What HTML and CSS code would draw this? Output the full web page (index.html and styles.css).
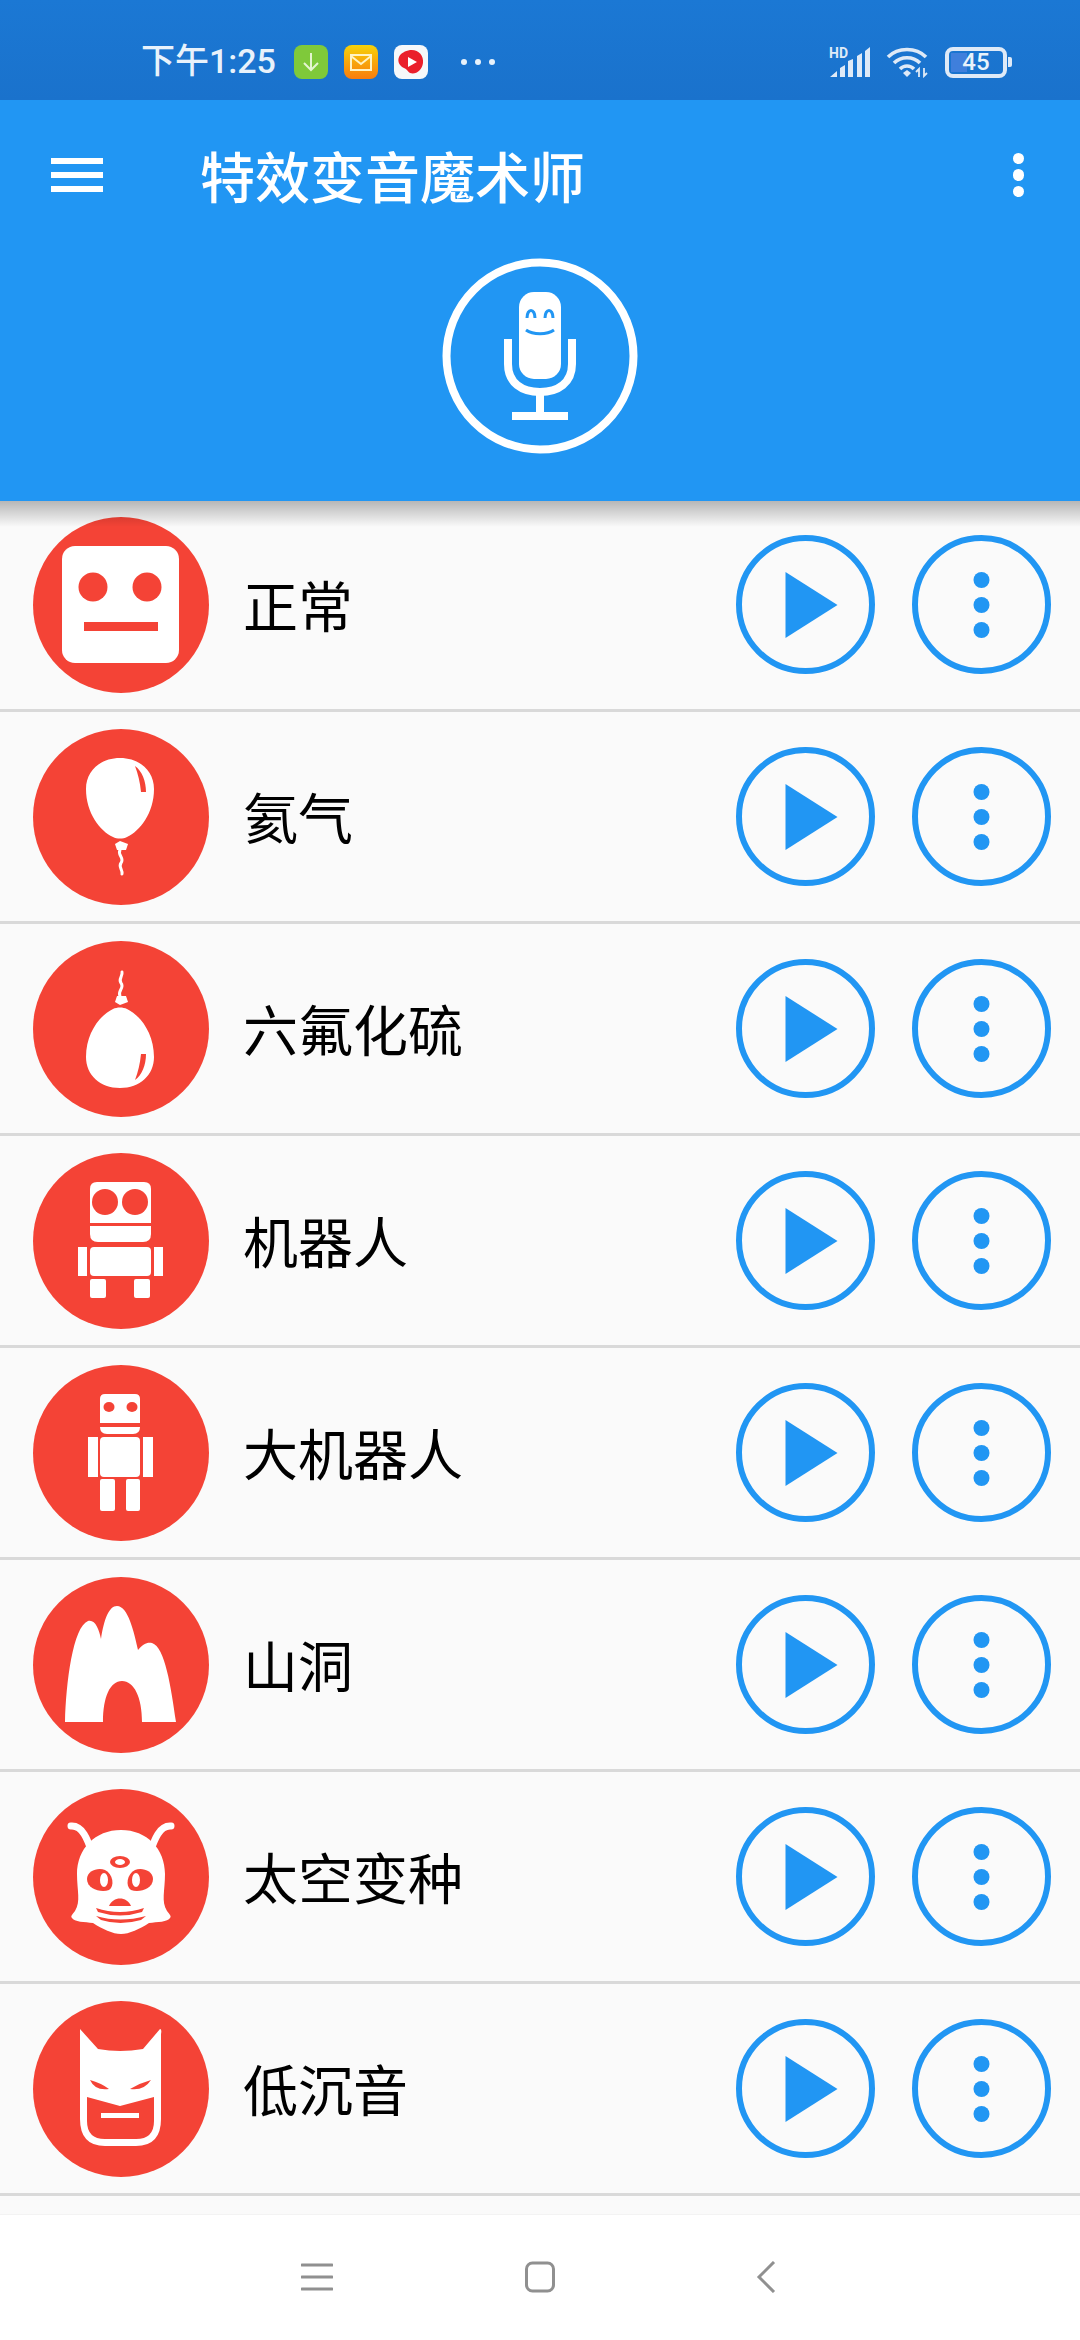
FILE: index.html
```html
<!DOCTYPE html>
<html lang="zh-CN">
<head>
    <meta charset="UTF-8">
    <meta name="viewport" content="width=device-width, initial-scale=1.0">
    <title>特效变音魔术师</title>
    <link rel="stylesheet" href="styles.css">
</head>
<body>
    <svg class="sprite" aria-hidden="true">
        <symbol id="btn-play" viewBox="0 0 139 139">
            <circle class="ring" cx="69.5" cy="69.5" r="66.5"/>
            <polygon class="blue" points="49.5,37 101.5,70 49.5,103"/>
        </symbol>
        <symbol id="btn-more" viewBox="0 0 139 139">
            <circle class="ring" cx="69.5" cy="69.5" r="66.5"/>
            <circle class="blue" cx="69.5" cy="45" r="8"/>
            <circle class="blue" cx="69.5" cy="70" r="8"/>
            <circle class="blue" cx="69.5" cy="95" r="8"/>
        </symbol>
        <symbol id="balloon" viewBox="0 0 176 176">
            <path class="w" d="M87 29C107 29 121 42 121 60C121 84 107 102 94 108C90 110 84 110 80 108C67 102 53 84 53 60C53 42 67 29 87 29Z"/>
            <path class="r" d="M102 37C109 42 113 52 113 63L108 63C107 53 105 45 102 37Z"/>
            <path class="w" d="M82 115L87 112L95 115L93 121L84 121Z"/>
            <path class="line" d="M87 121C84 126 92 129 88 134C85 138 90 141 89 145"/>
        </symbol>
    </svg>

    <div class="app">
        <header class="top">
            <div class="status">
                <span class="clock">下午1:25</span>
                <svg class="notif" viewBox="0 0 34 34">
                    <rect width="34" height="34" rx="8" fill="#7fc93a"/>
                    <path d="M17 8V25M10 18L17 25L24 18" fill="none" stroke="#e4f5cf" stroke-width="2"/>
                </svg>
                <svg class="notif" viewBox="0 0 34 34">
                    <defs>
                        <linearGradient id="mail" x1="0" y1="0" x2="0" y2="1">
                            <stop offset="0" stop-color="#f6d20a"/>
                            <stop offset="1" stop-color="#f97c0c"/>
                        </linearGradient>
                    </defs>
                    <rect width="34" height="34" rx="8" fill="url(#mail)"/>
                    <path d="M7 10H27V25H7ZM7 11L17 19L27 11" fill="none" stroke="#fff3c4" stroke-width="2"/>
                </svg>
                <svg class="notif" viewBox="0 0 34 34">
                    <rect width="34" height="34" rx="8" fill="#f6f8fa"/>
                    <path d="M16 5C24 4 30 10 29 18C28 25 22 30 16 28C14 27 13 24 10 23C6 21 3 17 5 12C7 8 11 6 16 5Z" fill="#ea1f2b"/>
                    <polygon points="14,12 23,17 14,22" fill="#fff"/>
                </svg>
                <span class="dots"><i></i><i></i><i></i></span>
                <span class="status-right">
                    <span class="signal">
                        <span class="hd">HD</span>
                        <svg class="bars" viewBox="0 0 42 30">
                            <path d="M1 30L8 24V30ZM11 21L16 18V30H11ZM19 14L24 12V30H19ZM28 9L33 6V30H28ZM36 4L41 0V30H36Z" fill="#dfeaf7"/>
                        </svg>
                    </span>
                    <svg class="wifi" viewBox="0 0 42 32">
                        <path d="M2 11C12 1 30 1 40 11M8 17C15 10 27 10 34 17M14 23C18 19 24 19 28 23" fill="none" stroke="#dfeaf7" stroke-width="3.6"/>
                        <path d="M17 27L21 24L25 27L21 31Z" fill="#dfeaf7"/>
                        <path d="M33 31V23L30 26M38 22V30L41 27" fill="none" stroke="#dfeaf7" stroke-width="1.8"/>
                    </svg>
                    <span class="battery">
                        <span class="battery-fill"></span>
                        <span class="battery-num">45</span>
                    </span>
                    <span class="battery-nub"></span>
                </span>
            </div>

            <div class="toolbar">
                <span class="burger"><i></i><i></i><i></i></span>
                <h1 class="title">特效变音魔术师</h1>
                <span class="overflow"><i></i><i></i><i></i></span>
            </div>

            <div class="mic-wrap">
                <svg class="mic" viewBox="0 0 196 196">
                    <circle cx="98" cy="98" r="93.5" fill="none" stroke="#fff" stroke-width="8"/>
                    <rect x="77" y="34" width="42" height="87" rx="15" fill="#fff"/>
                    <path d="M66 81V106C66 125 80 134 98 134C116 134 130 125 130 106V81" fill="none" stroke="#fff" stroke-width="8"/>
                    <rect x="94" y="134" width="8" height="22" fill="#fff"/>
                    <rect x="70" y="154" width="56" height="8" fill="#fff"/>
                    <path d="M85 60C85 50 93 50 93 60M103 60C103 50 111 50 111 60M84 72C91 77 105 77 112 72" fill="none" stroke="#2196f3" stroke-width="3"/>
                </svg>
            </div>
        </header>

        <main class="list">
            <div class="row">
                <svg class="avatar" viewBox="0 0 176 176">
                    <circle class="disc" cx="88" cy="88" r="88"/>
                    <rect class="w" x="29" y="29" width="117" height="117" rx="13"/>
                    <circle class="r" cx="60" cy="70" r="14.5"/>
                    <circle class="r" cx="114" cy="70" r="14.5"/>
                    <rect class="r" x="51" y="105" width="74" height="9"/>
                </svg>
                <span class="name">正常</span>
                <svg class="btn"><use href="#btn-play"/></svg>
                <svg class="btn"><use href="#btn-more"/></svg>
            </div>
            <div class="row">
                <svg class="avatar" viewBox="0 0 176 176">
                    <circle class="disc" cx="88" cy="88" r="88"/>
                    <use href="#balloon" width="176" height="176"/>
                </svg>
                <span class="name">氦气</span>
                <svg class="btn"><use href="#btn-play"/></svg>
                <svg class="btn"><use href="#btn-more"/></svg>
            </div>
            <div class="row">
                <svg class="avatar" viewBox="0 0 176 176">
                    <circle class="disc" cx="88" cy="88" r="88"/>
                    <use href="#balloon" width="176" height="176" transform="translate(0 176) scale(1 -1)"/>
                </svg>
                <span class="name">六氟化硫</span>
                <svg class="btn"><use href="#btn-play"/></svg>
                <svg class="btn"><use href="#btn-more"/></svg>
            </div>
            <div class="row">
                <svg class="avatar" viewBox="0 0 176 176">
                    <circle class="disc" cx="88" cy="88" r="88"/>
                    <path class="w" d="M57 36Q57 29 64 29H111Q118 29 118 36V70H57Z"/>
                    <circle class="r" cx="72" cy="49" r="13"/>
                    <circle class="r" cx="102" cy="49" r="13"/>
                    <path class="w" d="M57 73H118V81Q118 89 110 89H65Q57 89 57 81Z"/>
                    <rect class="w" x="57" y="94" width="61" height="29" rx="4"/>
                    <rect class="w" x="45" y="94" width="9" height="29"/>
                    <rect class="w" x="121" y="94" width="9" height="29"/>
                    <rect class="w" x="57" y="126" width="16" height="19" rx="2"/>
                    <rect class="w" x="101" y="126" width="16" height="19" rx="2"/>
                </svg>
                <span class="name">机器人</span>
                <svg class="btn"><use href="#btn-play"/></svg>
                <svg class="btn"><use href="#btn-more"/></svg>
            </div>
            <div class="row">
                <svg class="avatar" viewBox="0 0 176 176">
                    <circle class="disc" cx="88" cy="88" r="88"/>
                    <path class="w" d="M67 34Q67 29 72 29H102Q107 29 107 34V58H67Z"/>
                    <ellipse class="r" cx="76" cy="42" rx="5.5" ry="5"/>
                    <ellipse class="r" cx="99" cy="42" rx="5.5" ry="5"/>
                    <path class="w" d="M67 62H107Q107 69 100 69H74Q67 69 67 62Z"/>
                    <rect class="w" x="67" y="72" width="40" height="40" rx="4"/>
                    <rect class="w" x="55" y="72" width="10" height="40"/>
                    <rect class="w" x="110" y="72" width="10" height="40"/>
                    <rect class="w" x="67" y="114" width="15" height="32" rx="2"/>
                    <rect class="w" x="93" y="114" width="14" height="32" rx="2"/>
                </svg>
                <span class="name">大机器人</span>
                <svg class="btn"><use href="#btn-play"/></svg>
                <svg class="btn"><use href="#btn-more"/></svg>
            </div>
            <div class="row">
                <svg class="avatar" viewBox="0 0 176 176">
                    <circle class="disc" cx="88" cy="88" r="88"/>
                    <path class="w" d="M32 145C33 105 40 50 55 44C62 42 66 52 68 62C71 42 76 29 84 29C95 29 101 55 105 73C110 67 114 65 119 66C132 70 138 110 143 145H109C109 120 101 104 89 104C77 104 70 120 70 145Z"/>
                </svg>
                <span class="name">山洞</span>
                <svg class="btn"><use href="#btn-play"/></svg>
                <svg class="btn"><use href="#btn-more"/></svg>
            </div>
            <div class="row">
                <svg class="avatar" viewBox="0 0 176 176">
                    <circle class="disc" cx="88" cy="88" r="88"/>
                    <path class="line thick" d="M60 66C55 52 50 36 38 37M116 66C121 52 126 36 138 37"/>
                    <path class="w" d="M88 41C114 41 132 60 132 85C132 102 128 112 134 122C136 125 139 127 137 129C135 133 124 133 116 134C107 140 96 145 88 145C80 145 69 140 60 134C52 133 41 133 39 129C37 127 40 125 42 122C48 112 44 102 44 85C44 60 62 41 88 41Z"/>
                    <ellipse class="r" cx="87" cy="73" rx="10" ry="6"/>
                    <ellipse class="w" cx="87" cy="73" rx="5" ry="3"/>
                    <path class="r" d="M54 90C54 81 66 78 72 81C80 85 82 97 76 101C68 104 54 100 54 90Z"/>
                    <ellipse class="w" cx="71" cy="91" rx="4" ry="7"/>
                    <path class="r" d="M120 90C120 81 108 78 102 81C94 85 92 97 98 101C106 104 120 100 120 90Z"/>
                    <ellipse class="w" cx="103" cy="91" rx="4" ry="7"/>
                    <path class="r" d="M76 117C80 107 94 107 98 117Z"/>
                    <path class="r" d="M63 119Q87 127 111 119L109 123Q87 130 65 123Z"/>
                    <path class="r" d="M63 127Q87 134 113 127L108 131Q87 137 68 131Z"/>
                </svg>
                <span class="name">太空变种</span>
                <svg class="btn"><use href="#btn-play"/></svg>
                <svg class="btn"><use href="#btn-more"/></svg>
            </div>
            <div class="row">
                <svg class="avatar" viewBox="0 0 176 176">
                    <circle class="disc" cx="88" cy="88" r="88"/>
                    <path class="w" d="M47 28L65 48Q87 52 110 48L127 28Q129 28 128 33V118Q128 145 103 145H72Q47 145 47 118Z"/>
                    <path class="r" d="M57 79Q68 82 76 88Q62 90 57 79ZM118 79Q107 82 97 88Q111 90 118 79Z"/>
                    <path class="r" d="M54 96L87 105L121 96V120Q121 138 103 138H72Q54 138 54 120Z"/>
                    <rect class="w" x="68" y="112" width="38" height="5"/>
                </svg>
                <span class="name">低沉音</span>
                <svg class="btn"><use href="#btn-play"/></svg>
                <svg class="btn"><use href="#btn-more"/></svg>
            </div>
        </main>

        <nav class="navbar">
            <svg class="nav-icon" viewBox="0 0 32 32">
                <path d="M1 4H31M1 16H31M1 28H31" fill="none" stroke="#909090" stroke-width="3" stroke-linecap="round"/>
            </svg>
            <svg class="nav-icon" viewBox="0 0 32 32">
                <rect x="2.5" y="2" width="27" height="28" rx="6" fill="none" stroke="#909090" stroke-width="3"/>
            </svg>
            <svg class="nav-icon" viewBox="0 0 32 32">
                <path d="M27 1L12 16L27 31" fill="none" stroke="#909090" stroke-width="3"/>
            </svg>
        </nav>
    </div>
</body>
</html>
```

FILE: styles.css
```css
* {
    box-sizing: border-box;
}

body {
    margin: 0;
    width: 1080px;
    height: 2340px;
    overflow: hidden;
    font-family: "Noto Sans CJK SC", "Noto Sans", sans-serif;
    background-color: #fff;
}

.sprite {
    display: none;
}

.app {
    display: flex;
    flex-direction: column;
    height: 2340px;
}

/* header */
.top {
    position: relative;
    z-index: 2;
    height: 501px;
    background-color: #2196f3;
}

.top::after {
    content: "";
    position: absolute;
    left: 0;
    right: 0;
    top: 100%;
    height: 26px;
    background: linear-gradient(rgba(0, 0, 0, 0.27), rgba(0, 0, 0, 0));
}

.status {
    display: flex;
    align-items: center;
    height: 100px;
    padding: 24px 0 0 141px;
    background: linear-gradient(#1b78d4, #1a72cc);
}

.clock {
    width: 153px;
    margin-top: -1px;
    font-family: "Roboto", "Noto Sans CJK SC", sans-serif;
    font-size: 34px;
    font-weight: 500;
    line-height: 1.2;
    white-space: nowrap;
    color: #e8f2fb;
}

.notif {
    width: 34px;
    height: 34px;
    margin-right: 16px;
}

.dots {
    display: flex;
    gap: 8px;
    margin-left: 17px;
}

.dots i {
    width: 6px;
    height: 6px;
    border-radius: 50%;
    background-color: #e8f2fb;
}

.status-right {
    display: flex;
    align-items: center;
    margin-left: auto;
    padding-right: 68px;
}

.signal {
    position: relative;
    width: 42px;
    height: 30px;
}

.bars {
    display: block;
    width: 42px;
    height: 30px;
}

.hd {
    position: absolute;
    left: 0;
    top: 0;
    font-family: "Roboto", sans-serif;
    font-size: 14px;
    font-weight: 700;
    line-height: 12px;
    color: #dfeaf7;
}

.wifi {
    width: 42px;
    height: 32px;
    margin-left: 15px;
}

.battery {
    position: relative;
    display: flex;
    align-items: center;
    justify-content: center;
    width: 62px;
    height: 31px;
    margin-left: 17px;
    border: 4px solid #dfeaf7;
    border-radius: 8px;
}

.battery-fill {
    position: absolute;
    left: 2px;
    top: 2px;
    bottom: 2px;
    width: 16px;
    background-color: #3f7fdc;
}

.battery-num {
    position: relative;
    font-family: "Roboto", sans-serif;
    font-size: 24px;
    font-weight: 500;
    line-height: 1;
    color: #e8f2fb;
}

.battery-nub {
    width: 4px;
    height: 10px;
    margin-left: 1px;
    border-radius: 0 2px 2px 0;
    background-color: #dfeaf7;
}

.toolbar {
    display: flex;
    align-items: center;
    height: 150px;
    padding: 0 56px 0 51px;
}

.burger {
    display: flex;
    flex-direction: column;
    gap: 8px;
    width: 52px;
    margin-right: 97px;
}

.burger i {
    height: 6px;
    background-color: #fff;
}

.title {
    margin: 0 0 2px;
    font-size: 55px;
    font-weight: 500;
    line-height: 1;
    color: #fff;
}

.overflow {
    display: flex;
    flex-direction: column;
    gap: 5px;
    margin-left: auto;
}

.overflow i {
    width: 11.5px;
    height: 11.5px;
    border-radius: 50%;
    background-color: #fff;
}

.mic-wrap {
    display: flex;
    justify-content: center;
    margin-top: 8px;
}

.mic {
    width: 196px;
    height: 196px;
}

/* sound list */
.list {
    flex: 1;
    margin-top: -1px;
    overflow: hidden;
    background-color: #fafafa;
}

.row {
    display: flex;
    align-items: center;
    height: 212px;
    padding: 0 29px 0 33px;
    border-bottom: 3px solid #d9d9d9;
}

.avatar {
    flex: none;
    width: 176px;
    height: 176px;
}

.name {
    flex: 1;
    margin: 0 0 3px 34px;
    font-size: 55px;
    line-height: 1;
    color: #000;
}

.btn {
    flex: none;
    width: 139px;
    height: 139px;
    margin-left: 37px;
}

.ring {
    fill: none;
    stroke: #2196f3;
    stroke-width: 6;
}

.blue {
    fill: #2196f3;
}

.disc,
.r {
    fill: #f44336;
}

.w {
    fill: #fff;
}

.line {
    fill: none;
    stroke: #fff;
    stroke-width: 3;
    stroke-linecap: round;
}

.thick {
    stroke-width: 7;
}

/* system nav */
.navbar {
    display: flex;
    align-items: center;
    justify-content: center;
    gap: 191px;
    height: 126px;
    padding-bottom: 2px;
    background-color: #fff;
    border-top: 1px solid #f3f3f3;
}

.nav-icon {
    width: 32px;
    height: 32px;
}
```
